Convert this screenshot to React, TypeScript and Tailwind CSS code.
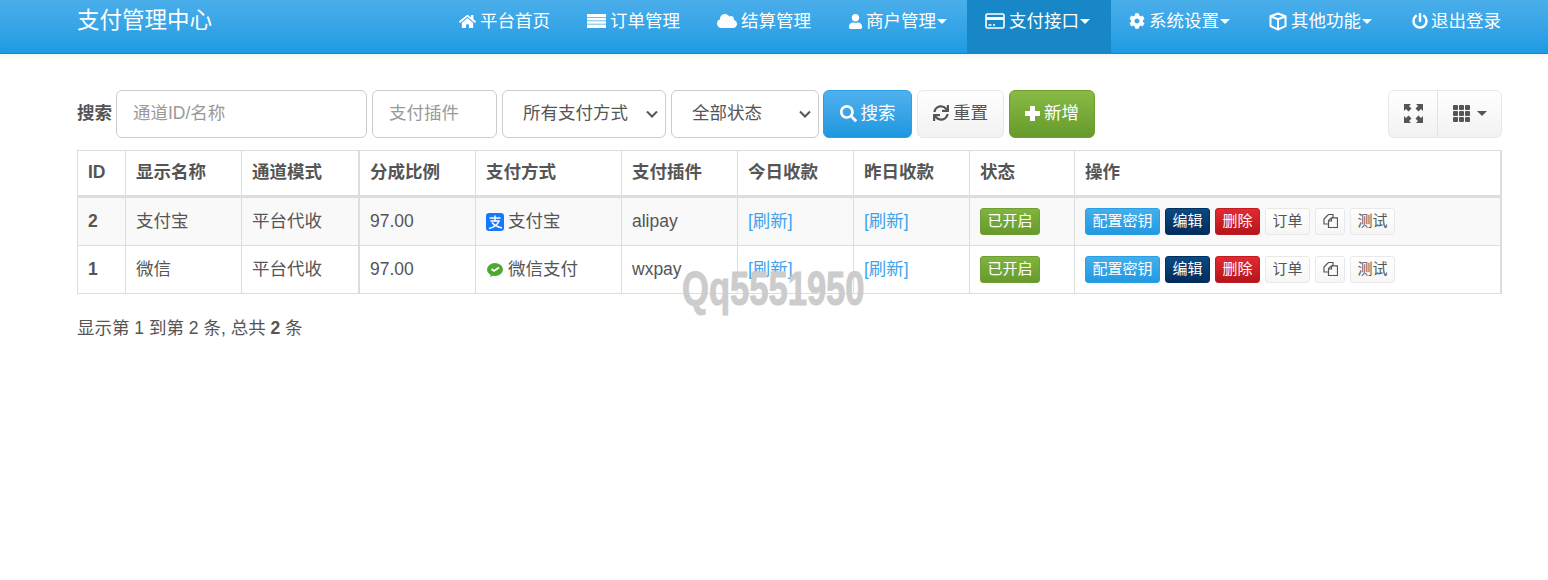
import { FaCloud, FaCog, FaHome, FaPowerOff, FaSearch, FaSync, FaUser } from "react-icons/fa";
import type { ReactNode } from "react";

const font = "font-['Liberation_Sans','Noto_Sans_CJK_SC',sans-serif]";

const ListIcon = (
  <svg width="19" height="16" viewBox="0 0 19 16" fill="currentColor">
    <path d="M0 1h19v3H0zM0 4.800h19v2.600H0zM0 8.200h19v2.600H0zM0 11.600h19V15H0z" />
  </svg>
);

const CardIcon = (
  <svg width="20" height="16" viewBox="0 0 20 16" fill="none" stroke="currentColor">
    <rect x="1" y="1" width="18" height="14" rx="1.500" strokeWidth="1.600" />
    <path d="M1 5.500h18" strokeWidth="3" />
    <path d="M3.500 12h3M8 12h2" strokeWidth="1.400" />
  </svg>
);

const CubeIcon = (
  <svg width="18" height="19" viewBox="0 0 18 19" fill="none" stroke="currentColor" strokeWidth="2" strokeLinejoin="round">
    <path d="M9 1.500 16.500 4.200v10L9 17.500 1.500 14.200v-10z" />
    <path d="M1.500 4.200 9 7.200l7.500-3M9 7.200v10.300" />
  </svg>
);

const navItems = [
  { label: "平台首页", icon: <FaHome size={17} />, box: "w-[21px]", width: "w-[128px]" },
  { label: "订单管理", icon: ListIcon, box: "w-[23px]", width: "w-[130px]" },
  { label: "结算管理", icon: <FaCloud size={20} />, box: "w-[24px]", width: "w-[131px]" },
  { label: "商户管理", icon: <FaUser size={15} />, box: "w-[18px]", width: "w-[137px]", caret: true },
  { label: "支付接口", icon: CardIcon, box: "w-[24px]", width: "w-[144px]", caret: true, active: true },
  { label: "系统设置", icon: <FaCog size={16} />, box: "w-[20px]", width: "w-[140px]", caret: true },
  { label: "其他功能", icon: CubeIcon, box: "w-[22px]", width: "w-[143px]", caret: true },
  { label: "退出登录", icon: <FaPowerOff size={16} />, box: "w-[19px]", width: "w-[126px]" },
];

function Caret() {
  return <span className="ml-[1px] inline-block h-0 w-0 border-x-[5px] border-t-[5px] border-x-transparent border-t-current" />;
}

function Btn({ className, children }: { className: string; children: ReactNode }) {
  return (
    <button className={`flex h-[48px] items-center justify-center rounded-[6px] border pb-[2px] text-[17.5px] ${className}`}>
      {children}
    </button>
  );
}

function Small({ className, children }: { className: string; children: ReactNode }) {
  return (
    <span className={`flex h-[27px] items-center justify-center rounded-[3px] border pb-[1px] text-[15px] ${className}`}>
      {children}
    </span>
  );
}

function Select({ width, label }: { width: string; label: string }) {
  return (
    <div className={`relative ml-[5px] ${width}`}>
      <select className="h-[48px] w-full appearance-none rounded-[6px] border border-[#ccc] bg-white pb-[1px] pl-[20px] pr-[24px] outline-none">
        <option>{label}</option>
      </select>
      <svg className="pointer-events-none absolute right-[8px] top-[20px]" width="12" height="8" viewBox="0 0 12 8" fill="none" stroke="#555" strokeWidth="2">
        <path d="M1 1.500 6 6.500l5-5" />
      </svg>
    </div>
  );
}

const whiteSmall = "border-[#e8e8e8] bg-gradient-to-b from-white to-[#f6f6f6] text-[#555]";

function Actions() {
  return (
    <div className="flex gap-[5px]">
      <Small className="w-[75px] border-[#2b9fe4] bg-gradient-to-b from-[#45aeeb] to-[#1f9ae2] text-white">配置密钥</Small>
      <Small className="w-[45px] border-[#04305f] bg-gradient-to-b from-[#0a4a85] to-[#032c5c] text-white">编辑</Small>
      <Small className="w-[45px] border-[#c41a22] bg-gradient-to-b from-[#e22a33] to-[#b3151b] text-white">删除</Small>
      <Small className={`w-[45px] ${whiteSmall}`}>订单</Small>
      <Small className={`w-[30px] ${whiteSmall}`}>
        <svg width="15" height="14" viewBox="0 0 15 14" fill="none" stroke="#555" strokeWidth="1.200">
          <path d="M5.500.5H10v3.500M5.500.5 1 5v5h4.500" />
          <path d="M5.500 6.500 8.500 3.800H14.500V13.500H5.500z" />
          <path d="M8.500 3.800V7H5.500" />
        </svg>
      </Small>
      <Small className={`w-[45px] ${whiteSmall}`}>测试</Small>
    </div>
  );
}

const th = "h-[47px] border-b-[3px] border-r border-b-[#ddd] border-r-[#ddd] px-[10px] pb-[1px] text-left font-bold";
const td = "h-[48px] border-b border-r border-[#ddd] px-[10px]";

function Row({ id, name, pay, icon, plugin, striped }: { id: string; name: string; pay: string; icon: ReactNode; plugin: string; striped?: boolean }) {
  return (
    <tr className={striped ? "bg-[#f9f9f9]" : "bg-white"}>
      <td className={`${td} font-bold`}>{id}</td>
      <td className={td}>{name}</td>
      <td className={`${td} border-r-2`}>平台代收</td>
      <td className={td}>97.00</td>
      <td className={td}>
        <span className="flex items-center gap-[4px]">
          {icon}
          {pay}
        </span>
      </td>
      <td className={td}>{plugin}</td>
      <td className={`${td} text-[#3fa4ec]`}>[刷新]</td>
      <td className={`${td} text-[#3fa4ec]`}>[刷新]</td>
      <td className={td}>
        <Small className="w-[60px] border-[#6f9f33] bg-gradient-to-b from-[#80b43f] to-[#669a2b] text-white">已开启</Small>
      </td>
      <td className={`${td} border-r-2`}>
        <Actions />
      </td>
    </tr>
  );
}

export default function App() {
  return (
    <div className={`relative min-h-[580px] bg-white text-[17.5px] text-[#555] ${font}`}>
      <header className="flex h-[54px] justify-between border-b border-[#1a86c6] bg-gradient-to-b from-[#4aaeea] to-[#1c9be3] pl-[77px] pr-[28px] text-white shadow-[0_1px_6px_rgba(0,0,0,0.08)]">
        <div className="pt-[5px] text-[22.5px] leading-[32px]">支付管理中心</div>
        <nav className="flex">
          {navItems.map((item) => (
            <a key={item.label} className={`flex h-[53px] pb-[11px] pl-[18px] ${item.width} items-center ${item.active ? "bg-[#1787c8]" : ""}`}>
              <span className={`flex ${item.box}`}>{item.icon}</span>
              {item.label}
              {item.caret && <Caret />}
            </a>
          ))}
        </nav>
      </header>

      <main className="pl-[77px] pr-[46px]">
        <div className="flex items-center pt-[36px]">
          <span className="mr-[4px] pb-[2px] font-bold">搜索</span>
          <input placeholder="通道ID/名称" className="h-[48px] w-[251px] rounded-[6px] border border-[#ccc] bg-white px-[16px] pb-[2px] outline-none placeholder:text-[#999]" />
          <input placeholder="支付插件" className="ml-[5px] h-[48px] w-[125px] rounded-[6px] border border-[#ccc] bg-white px-[16px] pb-[2px] outline-none placeholder:text-[#999]" />
          <Select width="w-[164px]" label="所有支付方式" />
          <Select width="w-[148px]" label="全部状态" />
          <Btn className="ml-[4px] w-[89px] gap-[4px] border-[#2b9fe4] bg-gradient-to-b from-[#4fb1ee] to-[#1b97e0] text-white">
            <FaSearch size={17} />
            搜索
          </Btn>
          <Btn className="ml-[5px] w-[87px] gap-[4px] border-[#e8e8e8] bg-gradient-to-b from-white to-[#f2f2f2] text-[#555]">
            <FaSync size={16} />
            重置
          </Btn>
          <Btn className="ml-[5px] w-[86px] gap-[4px] border-[#6f9f33] bg-gradient-to-b from-[#88ba44] to-[#669a2b] text-white">
            <svg width="15" height="15" viewBox="0 0 15 15" fill="currentColor">
              <path d="M5 0h5v5h5v5h-5v5H5v-5H0V5h5z" />
            </svg>
            新增
          </Btn>
          <div className="ml-auto flex h-[48px] w-[114px] rounded-[6px] border border-[#e8e8e8] bg-gradient-to-b from-white to-[#f2f2f2]">
            <span className="flex w-[49px] items-center justify-center border-r border-[#e2e2e2] pb-[2px]">
              <svg width="19" height="19" viewBox="0 0 19 19" fill="#555">
                <path d="M0 0h7L5 2l2.500 2.500-3 3L2 5 0 7zM19 0v7l-2-2-2.500 2.500-3-3L14 2l-2-2zM0 19v-7l2 2 2.500-2.500 3 3L5 17l2 2zM19 19h-7l2-2-2.500-2.500 3-3L17 14l2-2z" />
              </svg>
            </span>
            <span className="flex flex-1 items-center justify-center gap-[6px] pb-[2px]">
              <svg width="17" height="17" viewBox="0 0 17 17" fill="#555">
                <rect width="5" height="5" rx="1" />
                <rect x="6" width="5" height="5" rx="1" />
                <rect x="12" width="5" height="5" rx="1" />
                <rect y="6" width="5" height="5" rx="1" />
                <rect x="6" y="6" width="5" height="5" rx="1" />
                <rect x="12" y="6" width="5" height="5" rx="1" />
                <rect y="12" width="5" height="5" rx="1" />
                <rect x="6" y="12" width="5" height="5" rx="1" />
                <rect x="12" y="12" width="5" height="5" rx="1" />
              </svg>
              <Caret />
            </span>
          </div>
        </div>

        <table className="mt-[12px] w-[1425px] table-fixed border-separate border-spacing-0 border-l border-t border-[#ddd]">
          <colgroup>
            <col className="w-[48px]" />
            <col className="w-[116px]" />
            <col className="w-[118px]" />
            <col className="w-[116px]" />
            <col className="w-[146px]" />
            <col className="w-[116px]" />
            <col className="w-[116px]" />
            <col className="w-[116px]" />
            <col className="w-[105px]" />
            <col />
          </colgroup>
          <thead>
            <tr>
              <th className={th}>ID</th>
              <th className={th}>显示名称</th>
              <th className={`${th} border-r-2`}>通道模式</th>
              <th className={th}>分成比例</th>
              <th className={th}>支付方式</th>
              <th className={th}>支付插件</th>
              <th className={th}>今日收款</th>
              <th className={th}>昨日收款</th>
              <th className={th}>状态</th>
              <th className={`${th} border-r-2`}>操作</th>
            </tr>
          </thead>
          <tbody>
            <Row
              id="2"
              name="支付宝"
              pay="支付宝"
              plugin="alipay"
              striped
              icon={
                <svg width="18" height="18" viewBox="0 0 18 18" fill="none">
                  <rect width="18" height="18" rx="3" fill="#1677ff" />
                  <path d="M3.500 5h11M9 2.500V8M4.500 8h8.500C11.500 12 8 14.500 3 15.500M6 9.500c2 2.500 5.500 4.500 10 5.500" stroke="#fff" strokeWidth="1.500" />
                </svg>
              }
            />
            <Row
              id="1"
              name="微信"
              pay="微信支付"
              plugin="wxpay"
              icon={
                <svg width="18" height="18" viewBox="0 0 18 18">
                  <ellipse cx="9" cy="8.500" rx="8" ry="6.500" fill="#4fa82e" />
                  <path d="M5 13l-1 3 4-2z" fill="#4fa82e" />
                  <path d="M5.500 8l2.500 2 5-3.500" fill="none" stroke="#fff" strokeWidth="1.800" />
                </svg>
              }
            />
          </tbody>
        </table>

        <p className="mt-[21px]">
          显示第 1 到第 2 条, 总共 <b>2</b> 条
        </p>
      </main>

      <div className="absolute left-[682px] top-[261px] origin-left scale-x-[0.72] whitespace-nowrap text-[48px] font-bold leading-[56px] text-[#ccc] [-webkit-text-stroke:1px_#ccc]">
        Qq5551950
      </div>
    </div>
  );
}
